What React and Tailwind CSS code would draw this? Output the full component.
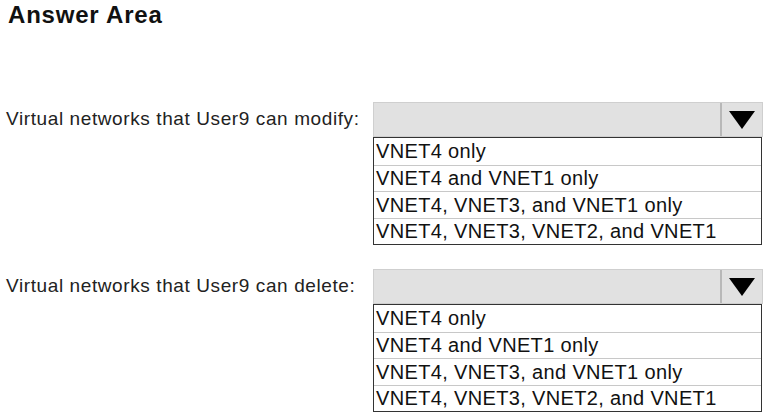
import React from 'react';

const OPTIONS = [
    'VNET4 only',
    'VNET4 and VNET1 only',
    'VNET4, VNET3, and VNET1 only',
    'VNET4, VNET3, VNET2, and VNET1',
];

const DropRow = ({ label }) => (
    <div className="flex items-start">
        <div className="w-[373px] h-[35px] flex items-center pl-[6px] text-[19px] tracking-[0.6px] text-[#222]">
            {label}
        </div>
        <div className="flex flex-col w-[390px]">
            <div className="h-[35px] flex bg-[#e1e1e1] border border-[#cfcfcf]">
                <div className="flex-1" />
                <div className="w-[42px] border-l-2 border-[#b8b8b8] flex items-center justify-center">
                    <svg width="26" height="18" viewBox="0 0 26 18">
                        <polygon points="0,0 26,0 13,18" fill="#000" />
                    </svg>
                </div>
            </div>
            <div className="w-[389px] border border-[#333] bg-white">
                {OPTIONS.map((o, i) => (
                    <div
                        key={o}
                        className={`h-[26.5px] flex items-center pl-[2px] text-[20px] tracking-[0.35px] leading-none text-[#111] ${i > 0 ? 'border-t border-[#c8c8c8]' : ''}`}
                    >
                        {o}
                    </div>
                ))}
            </div>
        </div>
    </div>
);

export default function App() {
    return (
        <div className="w-[771px] h-[413px] bg-white overflow-hidden font-['Liberation_Sans',Arial,sans-serif]">
            <h1 className="pl-[8px] pt-[1px] text-[24px] tracking-[0.8px] font-bold text-[#111] leading-[28px]">Answer Area</h1>
            <div className="mt-[73px]">
                <DropRow label="Virtual networks that User9 can modify:" />
            </div>
            <div className="mt-[24px]">
                <DropRow label="Virtual networks that User9 can delete:" />
            </div>
        </div>
    );
}
